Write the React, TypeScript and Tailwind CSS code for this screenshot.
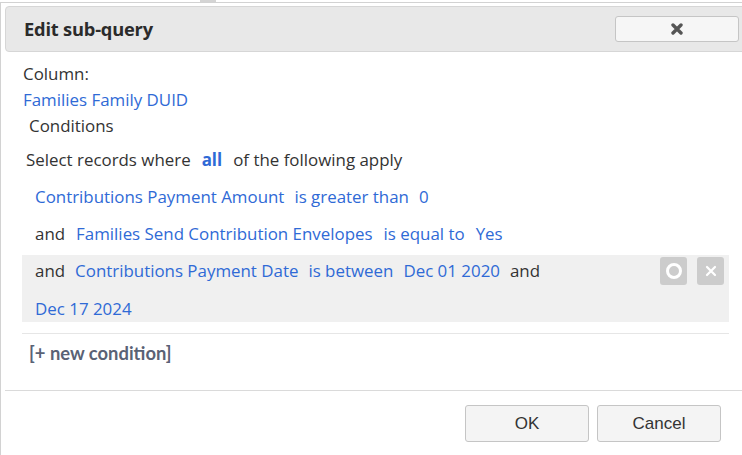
import React from 'react';

const body = { fontFamily: '"Open Sans", "Liberation Sans", sans-serif' };

function Field({ children }: { children: React.ReactNode }) {
  return <span className="text-[#2f6ad6] cursor-pointer">{children}</span>;
}

function Word({ children }: { children: React.ReactNode }) {
  return <span className="text-[#333]">{children}</span>;
}

function RowButton({ kind }: { kind: 'edit' | 'remove' }) {
  return (
    <button className="w-[27px] h-[28px] rounded-[3px] bg-[#cccccc] flex items-center justify-center">
      {kind === 'edit' ? (
        <svg width="18" height="18" viewBox="0 0 18 18">
          <circle cx="9" cy="9" r="6.5" fill="none" stroke="#fff" strokeWidth="3" />
        </svg>
      ) : (
        <svg width="14" height="14" viewBox="0 0 14 14">
          <path d="M3 3 L11 11 M11 3 L3 11" stroke="#fff" strokeWidth="2.2" strokeLinecap="round" />
        </svg>
      )}
    </button>
  );
}

export default function App() {
  return (
    <div className="w-[742px] h-[455px] bg-white overflow-hidden" style={body}>
      <div className="h-[2px] flex">
        <div className="ml-[200px] w-[16px] bg-[#d4d4d4]" />
      </div>
      <div className="h-[453px] border-t border-l border-[#d2d2d2] pl-[4px] pt-[3px] flex flex-col">
        {/* title bar */}
        <div className="h-[46px] mr-[-6px] border border-[#d6d6d6] rounded-[4px] bg-[#e8e8e8] flex items-center justify-between pl-[18px] pr-[8px]">
          <span className="text-[18.3px] font-bold text-[#2b2b2b] tracking-[-0.2px]">Edit sub-query</span>
          <button className="w-[124px] h-[26px] rounded-[3px] border border-[#c5c5c5] bg-[#f6f6f6] flex items-center justify-center">
            <svg width="12" height="12" viewBox="0 0 12 12">
              <path d="M2 2 L10 10 M10 2 L2 10" stroke="#555" strokeWidth="3.4" strokeLinecap="round" />
            </svg>
          </button>
        </div>

        {/* content */}
        <div className="pl-[17px] pr-[13px] pt-[9px] text-[16.9px] leading-[26px]">
          <div className="pl-[1px] text-[#333]">Column:</div>
          <div className="pl-[1px]"><Field>Families Family DUID</Field></div>
          <div className="pl-[7px] text-[#333]">Conditions</div>

          <div className="mt-[8px] pl-[4px] flex gap-x-[11px]">
            <Word>Select records where</Word>
            <span className="font-bold text-[#2f6ad6]">all</span>
            <Word>of the following apply</Word>
          </div>

          <div className="mt-[8px] flex flex-col">
            <div className="pt-[3px] pb-[8px] pl-[13px] flex flex-wrap gap-x-[10px]">
              <Field>Contributions Payment Amount</Field>
              <Field>is greater than</Field>
              <Field>0</Field>
            </div>
            <div className="pt-[3px] pb-[8px] pl-[13px] flex flex-wrap gap-x-[11px]">
              <Word>and</Word>
              <Field>Families Send Contribution Envelopes</Field>
              <Field>is equal to</Field>
              <Field>Yes</Field>
            </div>
            <div className="bg-[#f0f0f0] pt-[3px] pl-[13px] pr-[5px] flex gap-x-[20px]">
              <div className="flex-1 flex flex-wrap gap-x-[10px] gap-y-[12px]">
                <Word>and</Word>
                <Field>Contributions Payment Date</Field>
                <Field>is between</Field>
                <Field>Dec 01 2020</Field>
                <Word>and</Word>
                <Field>Dec 17 2024</Field>
              </div>
              <div className="flex gap-x-[10px] self-start -mt-[1px]">
                <RowButton kind="edit" />
                <RowButton kind="remove" />
              </div>
            </div>
          </div>

          <div className="mt-[11px] border-t border-[#e6e6e6] pt-[6px] pl-[7px]">
            <span
              className="font-bold text-[#5a6275] text-[18.4px]"
              style={{ fontFamily: 'Lato, "Open Sans", sans-serif' }}
            >
              [+ new condition]
            </span>
          </div>
        </div>

        {/* footer */}
        <div className="mt-auto mb-[13px] border-t border-[#dadada] pt-[14px] pr-[21px] flex justify-end gap-x-[8px]">
          {['OK', 'Cancel'].map((label) => (
            <button
              key={label}
              className="w-[124px] h-[37px] rounded-[3px] border border-[#c5c5c5] bg-[#f4f4f4] text-[17px] text-[#333]"
              style={{ fontFamily: '"Liberation Sans", Arial, sans-serif' }}
            >
              {label}
            </button>
          ))}
        </div>
      </div>
    </div>
  );
}
